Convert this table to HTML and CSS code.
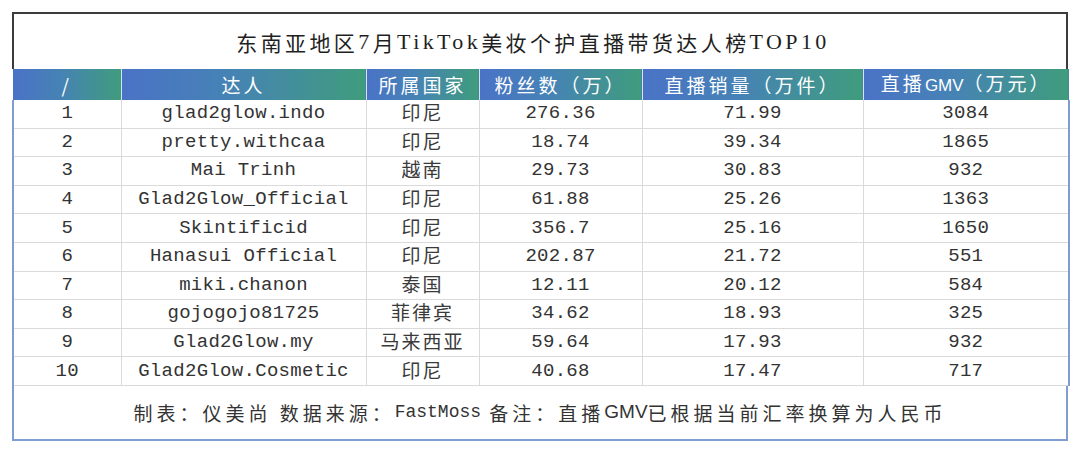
FILE: index.html
```html
<!DOCTYPE html>
<html lang="zh">
<head>
<meta charset="utf-8">
<link rel="stylesheet" href="styles.css">
</head>
<body>
<div class="frame">
  <div class="title">东南亚地区<span class="lt">7</span>月<span class="lt">TikTok</span>美妆个护直播带货达人榜<span class="lt">TOP10</span></div>
  <table class="grid">
    <colgroup>
      <col class="c1"><col class="c2"><col class="c3"><col class="c4"><col class="c5"><col class="c6">
    </colgroup>
    <thead>
      <tr>
        <th>/</th><th>达人</th><th>所属国家</th><th>粉丝数（万）</th><th>直播销量（万件）</th><th>直播<span class="gmv">GMV</span>（万元）</th>
      </tr>
    </thead>
    <tbody>
      <tr><td>1</td><td>glad2glow.indo</td><td class="cn"><span>印尼</span></td><td>276.36</td><td>71.99</td><td>3084</td></tr>
      <tr><td>2</td><td>pretty.withcaa</td><td class="cn"><span>印尼</span></td><td>18.74</td><td>39.34</td><td>1865</td></tr>
      <tr><td>3</td><td>Mai Trinh</td><td class="cn"><span>越南</span></td><td>29.73</td><td>30.83</td><td>932</td></tr>
      <tr><td>4</td><td>Glad2Glow_Official</td><td class="cn"><span>印尼</span></td><td>61.88</td><td>25.26</td><td>1363</td></tr>
      <tr><td>5</td><td>Skintificid</td><td class="cn"><span>印尼</span></td><td>356.7</td><td>25.16</td><td>1650</td></tr>
      <tr><td>6</td><td>Hanasui Official</td><td class="cn"><span>印尼</span></td><td>202.87</td><td>21.72</td><td>551</td></tr>
      <tr><td>7</td><td>miki.chanon</td><td class="cn"><span>泰国</span></td><td>12.11</td><td>20.12</td><td>584</td></tr>
      <tr><td>8</td><td>gojogojo81725</td><td class="cn"><span>菲律宾</span></td><td>34.62</td><td>18.93</td><td>325</td></tr>
      <tr><td>9</td><td>Glad2Glow.my</td><td class="cn"><span>马来西亚</span></td><td>59.64</td><td>17.93</td><td>932</td></tr>
      <tr><td>10</td><td>Glad2Glow.Cosmetic</td><td class="cn"><span>印尼</span></td><td>40.68</td><td>17.47</td><td>717</td></tr>
    </tbody>
  </table>
  <div class="foot">制表：仪美尚&nbsp;数据来源：<span class="mono">FastMoss</span>&nbsp;备注：直播<span class="gmv">GMV</span>已根据当前汇率换算为人民币</div>
</div>
</body>
</html>
```

FILE: styles.css
```css
html, body {
  margin: 0;
  padding: 0;
  background: #ffffff;
}
body {
  padding: 12px 12px 0 12px;
  font-family: "Liberation Mono", "Noto Sans CJK SC", monospace;
  color: #333333;
}
.frame {
  width: 1056px;
}
.title {
  height: 55px;
  box-sizing: content-box;
  width: 1038px;
  border: 2px solid #3c3c3c;
  border-bottom: none;
  display: flex;
  align-items: center;
  justify-content: center;
  padding-right: 14px;
  font-family: "Noto Sans CJK SC", sans-serif;
  font-size: 21px;
  letter-spacing: 3.4px;
  color: #1f1f1f;
  line-height: 24px;
}
.title .lt {
  font-family: "Liberation Serif", serif;
  font-size: 22px;
}
.grid {
  width: 1056px;
  border-collapse: collapse;
  table-layout: fixed;
}
.c1 { width: 108px; }
.c2 { width: 245px; }
.c3 { width: 113px; }
.c4 { width: 163px; }
.c5 { width: 221px; }
.c6 { width: 206px; }
.grid th {
  height: 28px;
  padding: 0;
  background: linear-gradient(90deg, #4a72c6 0%, #4683b4 45%, #3f9c7c 100%);
  color: #ffffff;
  font-family: "Noto Sans CJK SC", sans-serif;
  font-weight: 400;
  font-size: 19px;
  letter-spacing: 3px;
  border-left: 1px solid #d6e2ee;
  line-height: 28px;
}
.grid th:first-child { border-left: none; }
.grid th .gmv {
  font-family: "Liberation Sans Narrow", "Liberation Sans", sans-serif;
  font-size: 17px;
  letter-spacing: 0;
}
.grid td {
  height: 27.6px;
  padding: 0;
  text-align: center;
  font-size: 19px;
  letter-spacing: 0.3px;
  line-height: 27px;
  border: 1px solid #dadada;
  border-top: none;
  white-space: nowrap;
}
.grid td:first-child { border-left: 2px solid #7f9dd1; }
.grid td:last-child { border-right: 2px solid #7f9dd1; }
.grid td.cn {
  font-family: "Noto Sans CJK SC", sans-serif;
  font-size: 19px;
  letter-spacing: 2px;
  color: #3a3a3a;
}
.grid td.cn span {
  display: inline-block;
  transform: translateY(-2px);
}
.foot {
  height: 53px;
  border: 2px solid #7f9dd1;
  border-top: none;
  display: flex;
  align-items: center;
  justify-content: center;
  font-family: "Noto Sans CJK SC", sans-serif;
  font-size: 19px;
  letter-spacing: 4px;
  color: #333333;
}
.foot .mono {
  font-family: "Liberation Mono", monospace;
  font-size: 18px;
  letter-spacing: 0;
}
.foot .gmv {
  font-family: "Liberation Sans Narrow", "Liberation Sans", sans-serif;
  letter-spacing: 0;
}
```
